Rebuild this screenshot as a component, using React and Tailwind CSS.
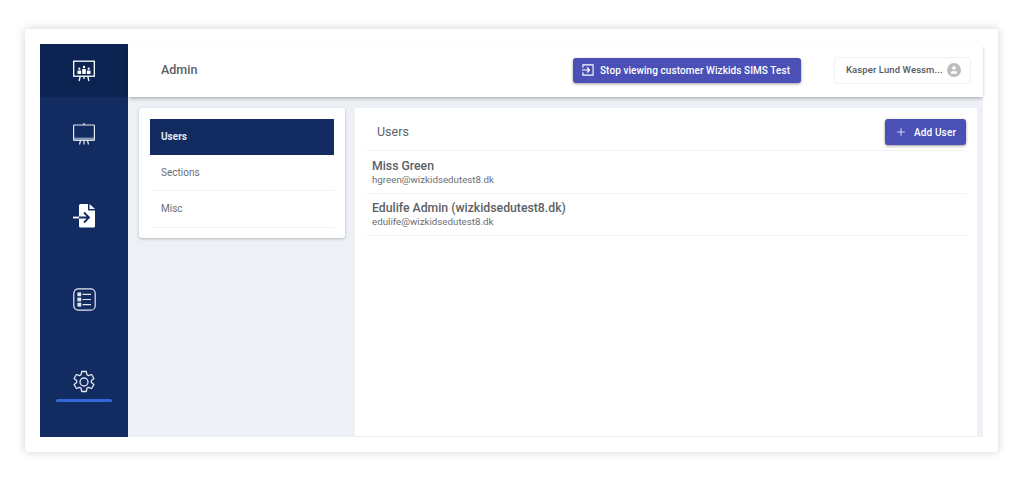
import { Plus, User } from "lucide-react";

const LogoIcon = () => (
  <svg width="24" height="22" viewBox="0 0 24 22" fill="none" stroke="white" strokeWidth="1.300">
    <rect x="1.700" y="1.200" width="20.600" height="15" />
    <path d="M8.300 16l-1.200 5M15.700 16l1.200 5M12 16v3" />
    <g fill="white" stroke="none">
      <rect x="5.500" y="10.500" width="3.600" height="3.500" />
      <rect x="10.200" y="9" width="3.600" height="5" />
      <rect x="14.900" y="10.500" width="3.600" height="3.500" />
      <circle cx="7.300" cy="8.700" r="1.100" />
      <circle cx="12" cy="7" r="1.200" />
      <circle cx="16.700" cy="8.700" r="1.100" />
    </g>
  </svg>
);

const BoardIcon = () => (
  <svg width="24" height="22" viewBox="0 0 24 22" fill="none" stroke="#e3e7f0" strokeWidth="1.200">
    <path d="M12 0v2" />
    <rect x="1.600" y="2" width="20.800" height="15.400" rx="0.500" />
    <rect x="2" y="14.600" width="20" height="2.600" fill="#8c9bb8" stroke="none" />
    <path d="M8.500 17.500l-1 4M12 17.500v4M15.500 17.500l1 4" />
  </svg>
);

const FileIcon = () => (
  <svg width="23" height="24" viewBox="0 0 23 24">
    <path
      d="M6 1.500A1.500 1.500 0 0 1 7.500 0H15v5.500a1 1 0 0 0 1 1h6V22a1.500 1.500 0 0 1-1.500 1.500h-13A1.500 1.500 0 0 1 6 22z"
      fill="white"
    />
    <path d="M16.500 0L22 5h-5.500z" fill="white" />
    <path d="M6 13.500H15.500M11 8.500l5 5-5 5" fill="none" stroke="#122c62" strokeWidth="1.800" />
    <path d="M0 13.500H6" stroke="white" strokeWidth="1.800" />
  </svg>
);

const ListIcon = () => (
  <svg width="23" height="23" viewBox="0 0 23 23" fill="none" stroke="#e3e7f0" strokeWidth="1.200">
    <rect x="0.800" y="0.800" width="21.400" height="21.400" rx="4.500" />
    <rect x="5" y="5" width="2.600" height="2.600" fill="#e3e7f0" />
    <rect x="5" y="10.200" width="2.600" height="2.600" fill="#e3e7f0" />
    <rect x="5" y="15.400" width="2.600" height="2.600" fill="#e3e7f0" />
    <path d="M9.500 6.300h8.500M9.500 11.500h8.500M9.500 16.700h8.500" />
  </svg>
);

const GearIcon = () => (
  <svg width="24" height="24" viewBox="0 0 24 24" fill="none" stroke="#e3e7f0" strokeWidth="1.300" strokeLinejoin="round">
    <path d="M9.700 1.500h4.600l.6 3.200 1.600.9 3.100-1.100 2.300 4-2.500 2.100v1.800l2.500 2.100-2.300 4-3.100-1.100-1.600.9-.6 3.200H9.700l-.6-3.200-1.600-.9-3.100 1.100-2.300-4 2.500-2.100v-1.800L2.100 8.500l2.300-4 3.100 1.100 1.600-.9z" />
    <circle cx="12" cy="12" r="4" />
  </svg>
);

const StopIcon = () => (
  <svg width="12" height="12" viewBox="0 0 13 13" fill="none" stroke="white" strokeWidth="1.200">
    <path d="M1 4V1h11v11H1V9" />
    <path d="M0 6.500h8M5.500 3.800l2.700 2.700-2.700 2.700" />
  </svg>
);

const users = [
  { name: "Miss Green", email: "hgreen@wizkidsedutest8.dk" },
  { name: "Edulife Admin (wizkidsedutest8.dk)", email: "edulife@wizkidsedutest8.dk" },
];

export default function App() {
  return (
    <div className="h-[481px] w-[1024px] overflow-hidden bg-white pl-[25px] pt-[29px] font-['Roboto',sans-serif]">
      <div className="flex h-[423px] w-[973px] rounded-[3px] bg-white p-[15px] shadow-[0_0_10px_rgba(0,0,0,0.18)]">
        {/* Sidebar */}
        <div className="flex w-[88px] shrink-0 flex-col bg-[#122c62]">
          <div className="flex h-[53px] items-center justify-center bg-[#0c2451]">
            <LogoIcon />
          </div>
          <div className="flex flex-col items-center pt-[26px]">
            <BoardIcon />
            <div className="mt-[59px]"><FileIcon /></div>
            <div className="mt-[60px]"><ListIcon /></div>
            <div className="mt-[59px]"><GearIcon /></div>
            <div className="mt-[5px] h-[2.500px] w-[56px] rounded-sm bg-[#3567d6]" />
          </div>
        </div>

        <div className="flex min-w-0 flex-1 flex-col bg-[#edf0f5]">
          {/* Header */}
          <div className="z-10 flex h-[53px] shrink-0 items-center bg-white pb-[1px] pl-[33px] pr-[12px] shadow-[0_2px_4px_-1px_rgba(0,0,0,0.35)]">
            <span className="text-[12.500px] font-medium text-[#5c5f66]">Admin</span>
            <button className="ml-auto flex h-[25px] w-[228px] items-center whitespace-nowrap rounded-[3px] bg-[#4a50b5] pl-[9px] text-[10px] font-medium tracking-[0.07px] text-white shadow-[0_1px_3px_rgba(0,0,0,0.4)]">
              <StopIcon />
              <span className="ml-[6px]">Stop viewing customer Wizkids SIMS Test</span>
            </button>
            <div className="ml-[33px] flex h-[27px] w-[137px] items-center whitespace-nowrap rounded-[3px] border border-[#f1f1f3] pl-[11px] text-[9.500px] font-medium tracking-[0.1px] text-[#55585f]">
              <span>Kasper Lund Wessm...</span>
              <span className="ml-[4px] flex h-[14px] w-[14px] items-center justify-center rounded-full bg-[#bdbdbd]">
                <User size={10} color="white" fill="white" strokeWidth={1} />
              </span>
            </div>
          </div>

          {/* Content */}
          <div className="flex min-h-0 flex-1 items-start gap-[10px] pl-[11px] pr-[6px] pt-[11px]">
            <div className="w-[206px] shrink-0 rounded-[3px] bg-white px-[11px] pb-[10px] pt-[11px] shadow-[0_1px_3px_rgba(0,0,0,0.25)]">
              <div className="flex h-[36px] items-center bg-[#122c62] pb-[1px] pl-[11px] text-[10px] font-bold text-[#e3e7f0]">Users</div>
              <div className="flex h-[36px] items-center border-b border-[#f2f3f5] pl-[11px] text-[10px] text-[#6b6e75]">Sections</div>
              <div className="flex h-[37px] items-center border-b border-[#f2f3f5] pb-[1px] pl-[11px] text-[10px] text-[#6b6e75]">Misc</div>
            </div>

            <div className="h-[328px] min-w-0 flex-1 rounded-t-[3px] bg-white px-[11px]">
              <div className="flex h-[43px] items-center justify-between border-b border-[#f0f1f3] pl-[11px] pt-[6px]">
                <span className="text-[12.500px] text-[#5c5f66]">Users</span>
                <button className="flex h-[26px] w-[81px] items-center justify-center whitespace-nowrap rounded-[3px] bg-[#4a50b5] text-[10px] font-medium tracking-[0.15px] text-white shadow-[0_1px_3px_rgba(0,0,0,0.4)]">
                  <Plus size={12} strokeWidth={1.500} />
                  <span className="ml-[7px]">Add User</span>
                </button>
              </div>
              {users.map((u) => (
                <div key={u.email} className="flex h-[42.500px] flex-col justify-center border-b border-[#f0f1f3] pl-[6px] pt-[1px]">
                  <div className="text-[12.250px] font-medium leading-[15px] text-[#5c5f66]">{u.name}</div>
                  <div className="text-[9.750px] leading-[12px] text-[#6b6e75]">{u.email}</div>
                </div>
              ))}
            </div>
          </div>
        </div>
      </div>
    </div>
  );
}
